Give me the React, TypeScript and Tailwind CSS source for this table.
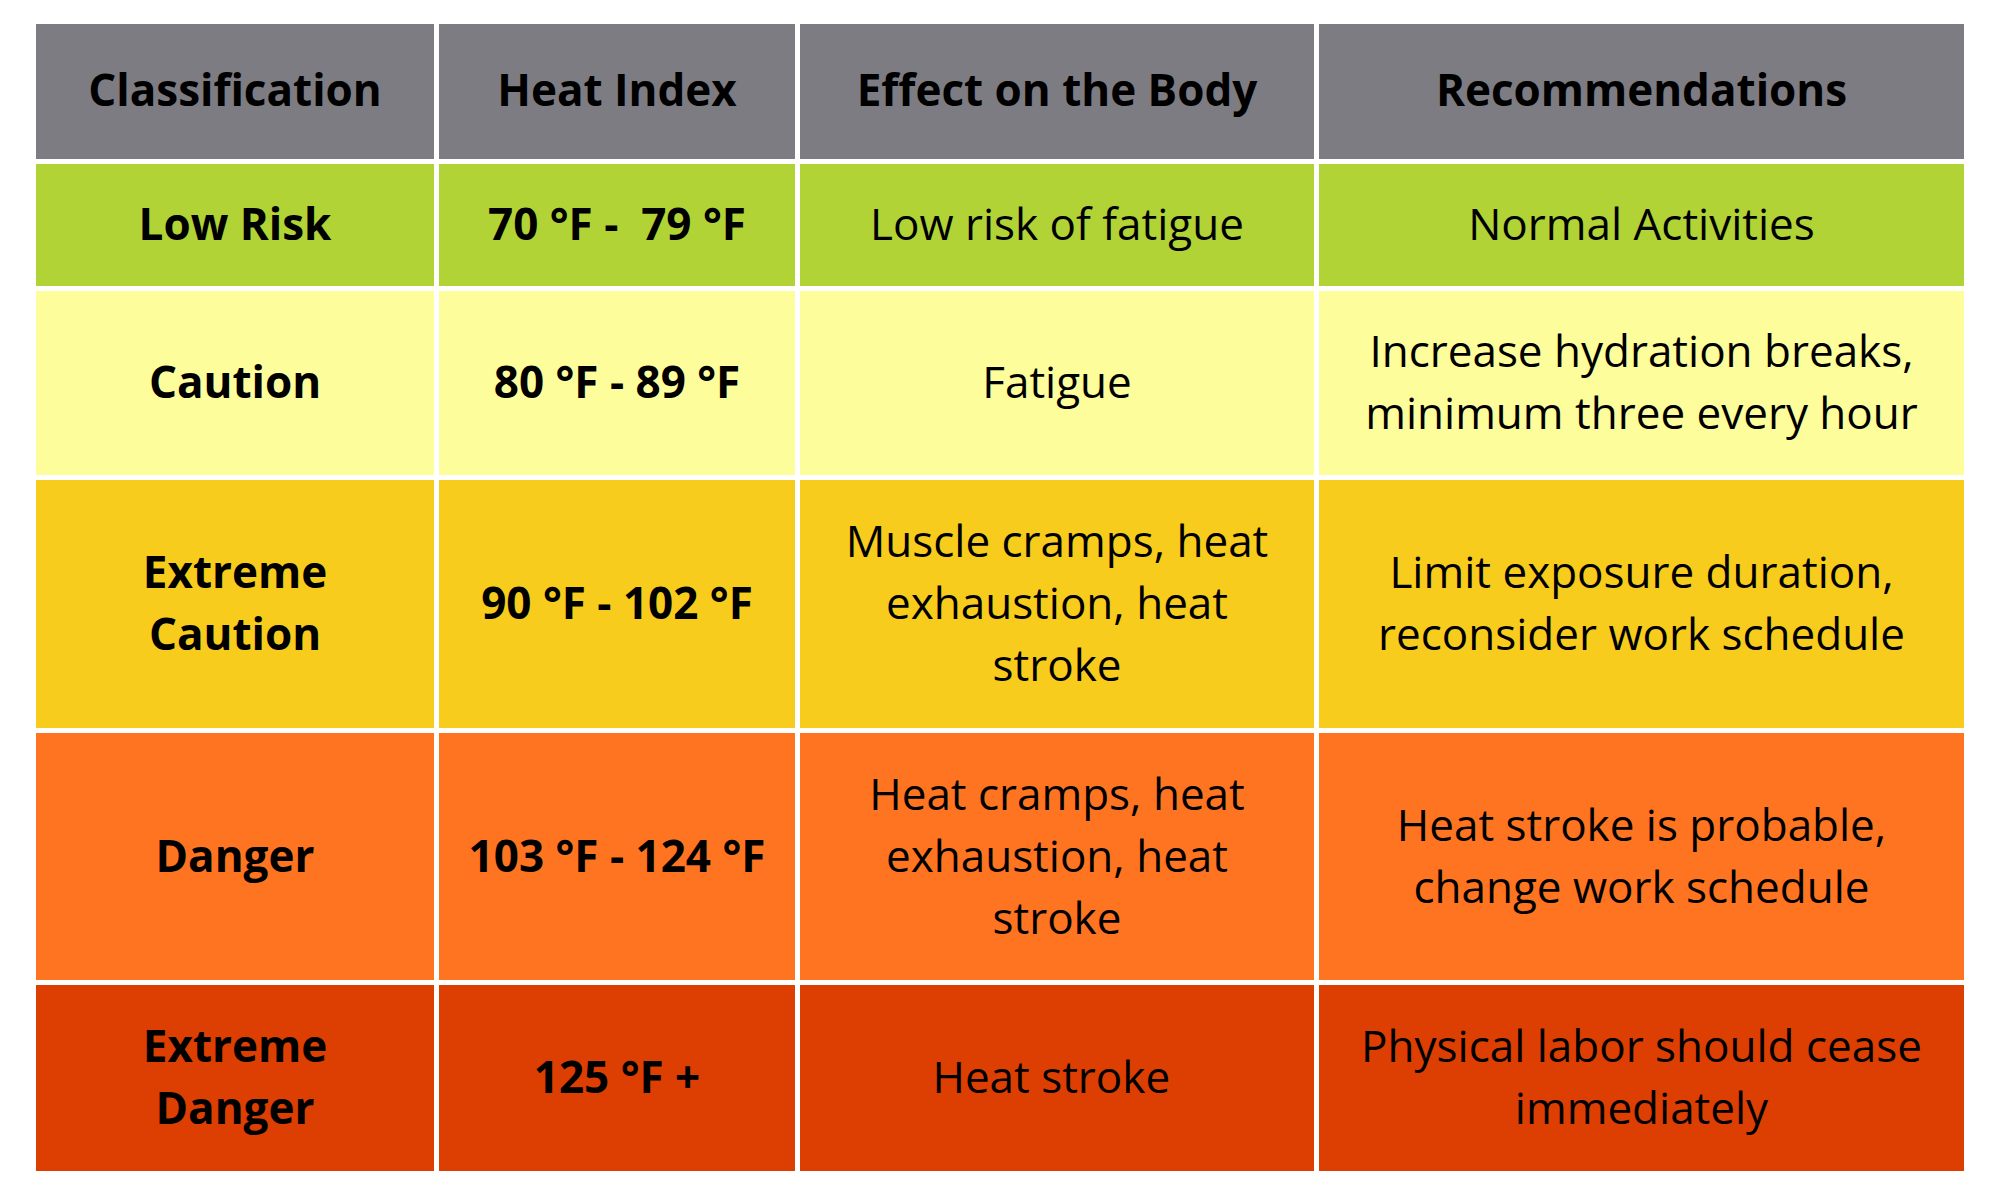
import { ReactNode } from "react";

type Row = {
  bg: string;
  h: string;
  cells: [ReactNode, ReactNode, ReactNode, ReactNode];
};

const rows: Row[] = [
  {
    bg: "bg-[#b1d336]",
    h: "h-[122px]",
    cells: ["Low Risk", "70 °F -\u00a0 79 °F", "Low risk of fatigue", "Normal Activities"],
  },
  {
    bg: "bg-[#fdfd9c]",
    h: "h-[184px]",
    cells: [
      "Caution",
      "80 °F - 89 °F",
      "Fatigue",
      <>
        Increase hydration breaks,
        <br />
        minimum three every hour
      </>,
    ],
  },
  {
    bg: "bg-[#f7cc1c]",
    h: "h-[248px]",
    cells: [
      <>
        Extreme
        <br />
        Caution
      </>,
      "90 °F - 102 °F",
      <>
        Muscle cramps, heat
        <br />
        exhaustion, heat
        <br />
        stroke
      </>,
      <>
        Limit exposure duration,
        <br />
        reconsider work schedule
      </>,
    ],
  },
  {
    bg: "bg-[#fe7421]",
    h: "h-[247px]",
    cells: [
      "Danger",
      "103 °F - 124 °F",
      <>
        Heat cramps, heat
        <br />
        exhaustion, heat
        <br />
        stroke
      </>,
      <>
        Heat stroke is probable,
        <br />
        change work schedule
      </>,
    ],
  },
  {
    bg: "bg-[#dd3e02]",
    h: "h-[186px]",
    cells: [
      <>
        Extreme
        <br />
        Danger
      </>,
      "125 °F +",
      "Heat stroke\u00a0",
      <>
        Physical labor should cease
        <br />
        immediately
      </>,
    ],
  },
];

const headers = ["Classification", "Heat Index", "Effect on the Body", "Recommendations"];

export default function App() {
  return (
    <div className="w-[2000px] h-[1200px] bg-white pt-[24px] pl-[36px] font-['Open_Sans',sans-serif] text-black">
      <div className="grid grid-cols-[398px_356px_514px_645px] gap-[5px] w-[1928px]">
        {headers.map((h, i) => (
          <div
            key={i}
            className="h-[135px] pb-[5px] bg-[#7d7c82] flex items-center justify-center text-center text-[44px] leading-[62px] font-bold"
          >
            {h}
          </div>
        ))}
        {rows.map((row, r) =>
          row.cells.map((c, i) => (
            <div
              key={r + "-" + i}
              className={`${row.bg} ${row.h} pb-[4px] flex items-center justify-center text-center text-[44px] leading-[62px] whitespace-nowrap ${
                i < 2 ? "font-bold" : "font-normal"
              }`}
            >
              <span>{c}</span>
            </div>
          )),
        )}
      </div>
    </div>
  );
}
